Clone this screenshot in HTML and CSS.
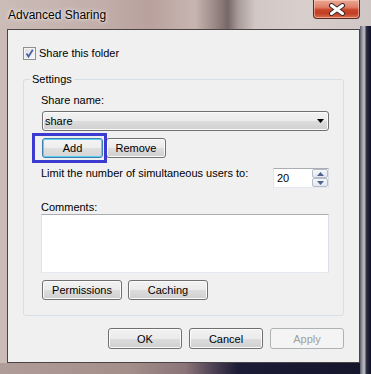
FILE: index.html
```html
<!DOCTYPE html>
<html>
<head>
<meta charset="utf-8">
<link rel="stylesheet" href="styles.css">
</head>
<body>
<div class="window">
  <div class="titlebar"><span class="title">Advanced Sharing</span></div>
  <div class="close">
    <svg width="18" height="13" viewBox="0 0 18 13">
      <path d="M3.5 2.5 L14.5 10.5 M14.5 2.5 L3.5 10.5" stroke="#3a2a2a" stroke-width="5" stroke-linecap="round"/>
      <path d="M3.5 2.5 L14.5 10.5 M14.5 2.5 L3.5 10.5" stroke="#ffffff" stroke-width="3" stroke-linecap="round"/>
    </svg>
  </div>
  <div class="client">
    <div class="check-row">
      <span class="checkbox">
        <svg width="11" height="11" viewBox="0 0 11 11"><path d="M2.5 5.5 L4.5 8.5 L8.8 1.8" fill="none" stroke="#4a60a8" stroke-width="1.8"/></svg>
      </span>
      <span class="check-label">Share this folder</span>
    </div>
    <fieldset class="group">
      <legend class="legend">Settings</legend>
      <div class="group-body">
        <div class="label">Share name:</div>
        <div class="combo">
          <span class="combo-text">share</span>
          <svg class="combo-arrow" width="7" height="4" viewBox="0 0 7 4"><path d="M0 0 H7 L3.5 4 Z" fill="#000"/></svg>
        </div>
        <div class="btn-row">
          <button class="btn btn-add">Add</button>
          <button class="btn btn-remove">Remove</button>
        </div>
        <div class="limit-row">
          <span class="label">Limit the number of simultaneous users to:</span>
          <div class="spinner">
            <span class="spin-text">20</span>
            <div class="spin-btns">
              <span class="spin"><svg width="7" height="4" viewBox="0 0 7 4"><path d="M0 4 H7 L3.5 0 Z" fill="#4d6390"/></svg></span>
              <span class="spin"><svg width="7" height="4" viewBox="0 0 7 4"><path d="M0 0 H7 L3.5 4 Z" fill="#4d6390"/></svg></span>
            </div>
          </div>
        </div>
        <div class="label comments-label">Comments:</div>
        <div class="textarea"></div>
        <div class="btn-row2">
          <button class="btn btn-wide">Permissions</button>
          <button class="btn btn-wide">Caching</button>
        </div>
      </div>
    </fieldset>
    <div class="footer">
      <button class="btn btn-dlg">OK</button>
      <button class="btn btn-dlg">Cancel</button>
      <button class="btn btn-dlg btn-disabled">Apply</button>
    </div>
  </div>
  <div class="annotation"></div>
</div>
</body>
</html>
```

FILE: styles.css
```css
html, body {
  margin: 0;
  padding: 0;
  background: #1a1a2e;
}

body {
  width: 371px;
  height: 374px;
  overflow: hidden;
  font-family: "Liberation Sans", Arial, sans-serif;
  font-size: 11px;
  color: #000;
}

.window {
  position: relative;
  box-sizing: border-box;
  width: 371px;
  height: 374px;
  padding: 0 11px 11px 7px;
  display: flex;
  flex-direction: column;
  background:
    linear-gradient(90deg, #5a5a66 0%, #a8a8b2 25%, #b8b8c2 40%, #2a2a3c 60%, #10102a 100%) 360px 26px / 11px 348px no-repeat,
    linear-gradient(90deg, #b09c98 0%, #a38e8a 35%, #8a7478 50%, #4a3e52 58%, #1c1c36 64%, #15152c 100%) 0 363px / 371px 11px no-repeat,
    linear-gradient(90deg, #cbbcb8 0px, #c2aeaa 100px, #b9a19d 150px, #c7b5b1 195px, #9a8886 215px, #766866 228px, #a89a98 238px, #d2c7c4 255px, #d8cfcc 300px, #cfc7c6 371px);
}

.titlebar {
  height: 29px;
  flex: none;
  display: flex;
  align-items: center;
  padding-left: 1px;
}

.title {
  font-size: 12px;
  line-height: 14px;
  margin-top: 1px;
  color: #000;
  text-shadow: 0 0 5px rgba(255, 255, 255, 0.9), 0 0 2px rgba(255, 255, 255, 0.8);
}

.close {
  position: absolute;
  left: 313px;
  top: 0;
  width: 47px;
  height: 19px;
  box-sizing: border-box;
  border: 1px solid #5e2a24;
  border-top: none;
  border-radius: 0 0 4px 4px;
  background: linear-gradient(#eaa896 0%, #df8068 40%, #c8452a 55%, #c24026 75%, #d9704f 100%);
  box-shadow: inset 0 0 0 1px rgba(255, 220, 210, 0.5);
  display: flex;
  align-items: center;
  justify-content: center;
}

.client {
  flex: 1;
  box-sizing: border-box;
  background: #f0f0f0;
  border: 1px solid #4a4444;
  display: flex;
  flex-direction: column;
  padding: 0 15px 0 15px;
}

.check-row {
  margin-top: 17px;
  height: 13px;
  display: flex;
  align-items: center;
}

.checkbox {
  width: 13px;
  height: 13px;
  box-sizing: border-box;
  border: 1px solid #8e8f8f;
  background: linear-gradient(135deg, #dcdcdc, #fbfbfb);
  box-shadow: inset 0 0 0 1px #f4f4f4;
  display: flex;
  align-items: center;
  justify-content: center;
}

.check-label {
  margin-left: 3px;
  line-height: 13px;
}

.group {
  margin: 12px 0 0 0;
  padding: 0;
  border: 1px solid #d5dfe5;
  border-radius: 3px;
  width: 321px;
  box-sizing: border-box;
  min-width: 0;
}

.legend {
  margin-left: 6px;
  padding: 0 2px;
  line-height: 14px;
}

.group-body {
  padding: 7px 14px 15px 17px;
  display: flex;
  flex-direction: column;
}

.label {
  line-height: 14px;
}

.combo {
  margin: 4px 0 0 1px;
  height: 20px;
  box-sizing: border-box;
  border: 1px solid #707070;
  border-radius: 3px;
  background: linear-gradient(#f2f2f2 0%, #ebebeb 50%, #dddddd 50%, #cfcfcf 100%);
  box-shadow: inset 0 0 0 1px #fbfbfb;
  display: flex;
  align-items: center;
  justify-content: space-between;
  padding: 0 4px 0 2px;
}

.combo-text {
  line-height: 14px;
}

.btn {
  font-family: "Liberation Sans", Arial, sans-serif;
  font-size: 11px;
  color: #000;
  box-sizing: border-box;
  border: 1px solid #707070;
  border-radius: 3px;
  background: linear-gradient(#f2f2f2 0%, #ebebeb 50%, #dddddd 50%, #cfcfcf 100%);
  box-shadow: inset 0 0 0 1px #fbfbfb;
  padding: 0;
  margin: 0;
  height: 20px;
  line-height: 14px;
  text-align: center;
}

.btn-row {
  margin-top: 7px;
  display: flex;
  gap: 3px;
  padding-left: 1px;
}

.btn-add {
  width: 61px;
  border-color: #3c7fb1;
  box-shadow: inset 0 0 0 1px #5fd0f3;
  background: linear-gradient(#f4f4f4 0%, #eeeeee 50%, #e0e0e0 50%, #d4d4d4 100%);
}

.btn-remove {
  width: 60px;
}

.limit-row {
  margin-top: 8px;
  display: flex;
  justify-content: space-between;
  align-items: flex-start;
}

.spinner {
  margin-top: 2px;
  width: 56px;
  height: 20px;
  box-sizing: border-box;
  border: 1px solid #abadb3;
  border-color: #abadb3 #dbdfe6 #e3e9ef #e2e3ea;
  background: #fff;
  display: flex;
  align-items: stretch;
}

.spin-text {
  flex: 1;
  padding-left: 3px;
  line-height: 18px;
  font-size: 11px;
}

.spin-btns {
  width: 16px;
  display: flex;
  flex-direction: column;
  gap: 0;
}

.spin {
  flex: 1;
  box-sizing: border-box;
  border: 1px solid #b6bdc9;
  border-radius: 2px;
  background: linear-gradient(#f5f7fa, #e3e7ee);
  display: flex;
  align-items: center;
  justify-content: center;
}

.comments-label {
  margin-top: 13px;
  line-height: 13px;
}

.textarea {
  height: 59px;
  box-sizing: border-box;
  border: 1px solid #e3e9ef;
  border-top-color: #abadb3;
  border-left-color: #e2e3ea;
  border-right-color: #dbdfe6;
  background: #fff;
}

.btn-row2 {
  margin-top: 7px;
  display: flex;
  gap: 6px;
  padding-left: 1px;
}

.btn-wide {
  width: 80px;
}

.footer {
  margin-top: 12px;
  display: flex;
  justify-content: flex-end;
  gap: 7px;
}

.btn-dlg {
  width: 74px;
  height: 21px;
}

.btn-disabled {
  color: #a0a0a0;
  border-color: #adb2b5;
  background: #f4f4f4;
  box-shadow: none;
}

.annotation {
  position: absolute;
  left: 32px;
  top: 133px;
  width: 75px;
  height: 30px;
  box-sizing: border-box;
  border: 3px solid #3b3bd2;
}
```
